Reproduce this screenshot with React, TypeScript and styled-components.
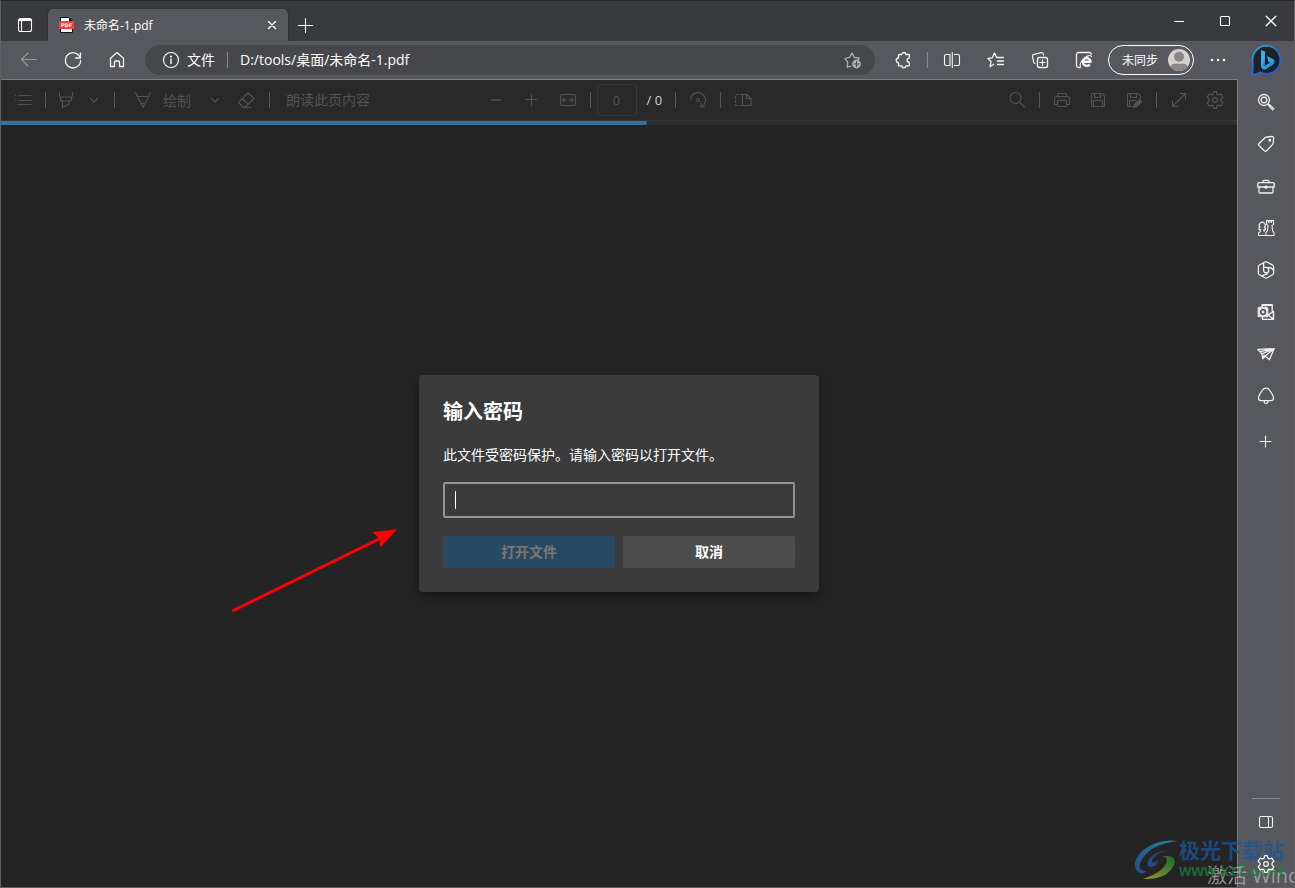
import React from "react";
import styled, { createGlobalStyle } from "styled-components";

const GlobalStyle = createGlobalStyle`
  *, *::before, *::after { box-sizing: border-box; }
  body {
    margin: 0;
    background: #242424;
    font-family: "Open Sans", "Noto Sans CJK SC", sans-serif;
    font-size: 14px;
    color: #fff;
  }
  button, input { font: inherit; color: inherit; }
`;

const Browser = styled.div`
  position: relative;
  display: flex;
  flex-direction: column;
  min-height: 100vh;
  overflow: hidden;
  border: 1px solid #5f5f61;
  border-top-color: #2b2b2f;
  background: #57585d;
`;

const Glyph = styled.svg<{ $size?: number }>`
  display: block;
  flex: none;
  width: ${(p) => p.$size ?? 20}px;
  height: ${(p) => p.$size ?? 20}px;
  fill: none;
  stroke: currentColor;
  stroke-width: 1.1;
  stroke-linecap: round;
  stroke-linejoin: round;
`;

type IconProps = { children: React.ReactNode; size?: number };
const Icon = ({ children, size }: IconProps) => (
  <Glyph viewBox="0 0 20 20" $size={size} aria-hidden="true">
    {children}
  </Glyph>
);

/* ---------- title bar ---------- */

const TitleBar = styled.header`
  display: flex;
  align-items: flex-end;
  height: 40px;
  background: #393a3d;
`;

const TitleButton = styled.button<{ $width: number }>`
  display: flex;
  align-items: center;
  justify-content: center;
  width: ${(p) => p.$width}px;
  height: 32px;
  padding: 0;
  border: 0;
  background: none;
`;

const Tab = styled.div`
  display: flex;
  align-items: center;
  gap: 8px;
  width: 240px;
  height: 32px;
  padding: 0 6px 0 10px;
  border-radius: 5px 5px 0 0;
  background: #57585d;
  box-shadow: 0 0 2px #222327;
  font-size: 12px;
`;

const TabTitle = styled.span`
  flex: 1;
  white-space: nowrap;
`;

const TabClose = styled.button`
  display: flex;
  padding: 0;
  border: 0;
  background: none;
`;

const WindowControls = styled.div`
  display: flex;
  align-self: flex-start;
  height: 40px;
  margin-left: auto;
  align-items: center;
`;

/* ---------- navigation bar ---------- */

const NavBar = styled.nav`
  position: relative;
  display: flex;
  align-items: center;
  height: 38px;
  padding: 0 2px 0 6px;
  background: #57585d;
`;

const NavButton = styled.button<{ $dim?: boolean }>`
  display: flex;
  align-items: center;
  justify-content: center;
  flex: none;
  width: 44px;
  height: 32px;
  padding: 0;
  border: 0;
  background: none;
  color: ${(p) => (p.$dim ? "#9a9a9d" : "#f4f4f4")};
`;

const Address = styled.div`
  display: flex;
  align-items: center;
  flex: 1;
  min-width: 0;
  height: 30px;
  margin: 0 6px;
  padding: 0 12px 0 16px;
  border-radius: 15px;
  background: #46474b;
`;

const SiteInfo = styled.button`
  display: flex;
  align-items: center;
  gap: 6px;
  padding: 0;
  border: 0;
  background: none;
  line-height: 18px;
  white-space: nowrap;
`;

const NavDivider = styled.span<{ $gap: number }>`
  width: 1px;
  height: 16px;
  margin: 0 ${(p) => p.$gap}px;
  background: #88898c;
`;

const AddressInput = styled.input`
  flex: 1;
  min-width: 0;
  padding: 0 0 2px;
  border: 0;
  outline: 0;
  background: none;
`;

const StarButton = styled(TabClose)`
  color: #b0b0b2;
`;

const Profile = styled.button`
  display: flex;
  align-items: center;
  justify-content: space-between;
  flex: none;
  width: 86px;
  height: 30px;
  margin: 0 2px;
  padding: 0 2px 0 13px;
  border: 1px solid #fff;
  border-radius: 15px;
  background: none;
  font-size: 12px;
`;

const BingButton = styled(NavButton)`
  width: 52px;
`;

/* ---------- content ---------- */

const Content = styled.div`
  display: flex;
  flex: 1;
`;

const Viewer = styled.main`
  position: relative;
  display: flex;
  flex-direction: column;
  flex: 1;
  min-width: 0;
  border-top: 1px solid #7d7e82;
  border-right: 1px solid #7d7e82;
  background: #242424;
`;

const PdfBar = styled.div`
  display: grid;
  grid-template-columns: 1fr auto 1fr;
  height: 41px;
  border-bottom: 1px solid #373737;
  background: #292929;
  color: #535353;
`;

const ToolGroup = styled.div<{ $end?: boolean }>`
  display: flex;
  align-items: center;
  justify-content: ${(p) => (p.$end ? "flex-end" : "flex-start")};
  padding: 0 4px;
`;

const Tool = styled.button<{ $width?: number }>`
  display: flex;
  align-items: center;
  justify-content: center;
  gap: 10px;
  width: ${(p) => p.$width ?? 36}px;
  height: 32px;
  padding: 0;
  border: 0;
  background: none;
  white-space: nowrap;
`;

const TextTool = styled(Tool)`
  width: auto;
  padding: 0 12px 0 10px;
`;

const ReadTool = styled(TextTool)`
  padding: 0 12px 2px;
`;

const ToolDivider = styled.span<{ $gap?: number }>`
  width: 1px;
  height: 16px;
  margin: 0 ${(p) => p.$gap ?? 4}px;
  background: #565656;
`;

const PageInput = styled.input`
  width: 40px;
  height: 32px;
  margin: 0 0 0 2px;
  padding: 0;
  border: 1px solid #363636;
  border-radius: 2px;
  background: none;
  text-align: center;
  font-size: 13px;
`;

const PageTotal = styled.span`
  width: 34px;
  padding-left: 10px;
  color: #d0d0d0;
  font-size: 13px;
  white-space: nowrap;
`;

const Track = styled.div`
  height: 4px;
  background: #2e2e2e;
`;

const Progress = styled.div`
  width: 646px;
  max-width: 100%;
  height: 4px;
  border-radius: 0 2px 2px 0;
  background: #35709f;
`;

/* ---------- dialog ---------- */

const Overlay = styled.div`
  position: absolute;
  inset: 0;
  display: flex;
  align-items: center;
  justify-content: center;
`;

const Dialog = styled.form`
  position: relative;
  width: 400px;
  padding: 24px;
  border-radius: 4px;
  background: #3b3b3b;
  box-shadow: 0 4px 12px rgba(0, 0, 0, 0.45);
`;

const DialogTitle = styled.h1`
  margin: 0 0 20px;
  font-size: 20px;
  line-height: 26px;
  font-weight: 700;
`;

const DialogLabel = styled.label`
  display: block;
  margin-bottom: 17px;
  line-height: 20px;
`;

const PasswordField = styled.div`
  position: relative;
  margin-bottom: 18px;

  &::after {
    content: "";
    position: absolute;
    top: 9px;
    left: 12px;
    width: 1px;
    height: 18px;
    background: #fff;
  }
`;

const PasswordInput = styled.input`
  display: block;
  width: 100%;
  height: 36px;
  padding: 0 10px;
  border: 2px solid #949494;
  border-radius: 2px;
  outline: 0;
  background: transparent;
  caret-color: transparent;
`;

const Actions = styled.div`
  display: flex;
  gap: 8px;
`;

const ActionButton = styled.button<{ $primary?: boolean }>`
  flex: 1;
  height: 32px;
  padding: 0 0 2px;
  border: 0;
  border-radius: 2px;
  background: ${(p) => (p.$primary ? "#294a63" : "#4d4d4d")};
  color: ${(p) => (p.$primary ? "#7b7773" : "#fff")};
  font-weight: 700;
`;

const Arrow = styled.svg`
  position: absolute;
  top: 150px;
  right: calc(100% + 19px);
  width: 170px;
  height: 90px;
`;

/* ---------- sidebar ---------- */

const Sidebar = styled.aside`
  position: relative;
  z-index: 1;
  display: flex;
  flex-direction: column;
  align-items: center;
  flex: none;
  width: 56px;
  padding: 2px 0;
`;

const SideButton = styled.button`
  display: flex;
  align-items: center;
  justify-content: center;
  width: 42px;
  height: 42px;
  padding: 0;
  border: 0;
  background: none;
  color: #f0f0f0;
`;

const AddButton = styled(SideButton)`
  margin-top: 4px;
`;

const SideRule = styled.hr`
  width: 28px;
  height: 1px;
  margin: auto 0 2px;
  border: 0;
  background: #88898c;
`;

/* ---------- watermark ---------- */

const Watermark = styled.div`
  position: absolute;
  right: 10px;
  bottom: 5px;
  display: flex;
  align-items: center;
  pointer-events: none;
  opacity: 0.75;
`;

const WatermarkText = styled.div`
  display: flex;
  flex-direction: column;
  white-space: nowrap;
  font-weight: 700;
`;

const SiteName = styled.span`
  color: #1c5597;
  font-size: 21px;
  line-height: 22px;
`;

const SiteUrl = styled.span`
  color: #14803a;
  font-size: 16px;
  line-height: 20px;
  font-family: "Liberation Sans", sans-serif;
`;

const Activation = styled.div`
  position: absolute;
  left: calc(100% - 87px);
  bottom: -3px;
  color: rgba(185, 185, 185, 0.72);
  font-size: 20px;
  line-height: 28px;
  white-space: nowrap;
  pointer-events: none;
`;

const gear =
  "M8.1 4.1 L8.7 1.6 H11.3 L11.9 4.1 L13.3 4.9 L15.8 4.2 L17.8 7.2 L16 9.1 V10.9 L17.8 12.8 L15.8 15.8 L13.3 15.1 L11.9 15.9 L11.3 18.4 H8.7 L8.1 15.9 L6.7 15.1 L4.2 15.8 L2.2 12.8 L4 10.9 V9.1 L2.2 7.2 L4.2 4.2 L6.7 4.9 Z";

const GearIcon = () => (
  <Icon>
    <path d={gear} strokeWidth="1.3" />
    <circle cx="10" cy="10" r="2.3" strokeWidth="1.3" />
  </Icon>
);

const ChevronIcon = () => (
  <Icon>
    <path d="M6.5 8.5 L10 12 L13.5 8.5" />
  </Icon>
);

const BingIcon = () => (
  <svg width="32" height="32" viewBox="0 0 32 32" aria-hidden="true">
    <defs>
      <linearGradient id="ring" x1="0" y1="0" x2="0.6" y2="1">
        <stop offset="0" stopColor="#2cc3dc" />
        <stop offset="0.5" stopColor="#1b78dc" />
        <stop offset="1" stopColor="#2158e8" />
      </linearGradient>
      <linearGradient id="bee" x1="0" y1="0" x2="0.7" y2="1">
        <stop offset="0" stopColor="#3a9cff" />
        <stop offset="0.5" stopColor="#36b6f6" />
        <stop offset="1" stopColor="#2a7bea" />
      </linearGradient>
      <linearGradient id="bowl" x1="0" y1="0" x2="1" y2="1">
        <stop offset="0" stopColor="#30d8e8" />
        <stop offset="1" stopColor="#1f77d8" />
      </linearGradient>
    </defs>
    <path
      d="M16.5 1.8 A14 14 0 1 1 10 28.3 Q6 30.6 2.2 30.2 Q3.3 26 2.6 17 A14 14 0 0 1 16.5 1.8 Z"
      fill="#202125"
      stroke="url(#ring)"
      strokeWidth="1.6"
    />
    <path d="M11 6 L15 7.4 V21 L12.6 24 L11 22.6 Z" fill="url(#bee)" />
    <path
      d="M17 12 L24 15.6 Q25.6 19 22.6 21 L15.4 25.4 Q12.4 26.4 11.2 22.8 L14.6 22 L20 18.7 L18.4 17.8 Z"
      fill="url(#bowl)"
    />
  </svg>
);

const PdfFileIcon = () => (
  <svg width="18" height="18" viewBox="0 0 18 18" aria-hidden="true">
    <path d="M2.5 1.5 H11 L14.5 5 V16.5 H2.5 Z" fill="#fff" stroke="#111" strokeWidth="1" />
    <path d="M11 1.5 V5 H14.5 Z" fill="#111" />
    <rect x="1" y="5" width="15" height="8" rx="1" fill="#f73b3b" />
    <text
      x="8.5"
      y="11"
      textAnchor="middle"
      fontSize="5"
      fontWeight="700"
      fontFamily="DejaVu Sans, sans-serif"
      fill="#fff"
    >
      PDF
    </text>
  </svg>
);

const Avatar = () => (
  <svg width="24" height="24" viewBox="0 0 24 24" aria-hidden="true">
    <defs>
      <clipPath id="face">
        <circle cx="12" cy="12" r="11" />
      </clipPath>
    </defs>
    <circle cx="12" cy="12" r="11" fill="#d3d1ce" />
    <g clipPath="url(#face)" fill="#8a8785">
      <circle cx="12" cy="8.8" r="5" />
      <path d="M3.5 24 V20 Q3.5 15.8 8 15.8 H16 Q20.5 15.8 20.5 20 V24 Z" />
    </g>
  </svg>
);

export default function App() {
  return (
    <Browser>
      <GlobalStyle />
      <TitleBar>
        <TitleButton $width={47} aria-label="标签页操作">
          <Icon>
            <rect x="3.5" y="3.5" width="13" height="13" rx="2" />
            <path d="M4 4.5 H16 M4 5.5 H16 M6.5 6 V16" />
          </Icon>
        </TitleButton>
        <Tab>
          <PdfFileIcon />
          <TabTitle>未命名-1.pdf</TabTitle>
          <TabClose aria-label="关闭标签页">
            <Icon>
              <path d="M6.5 6.5 L13.5 13.5 M13.5 6.5 L6.5 13.5" strokeWidth="1.4" />
            </Icon>
          </TabClose>
        </Tab>
        <TitleButton $width={34} aria-label="新建标签页">
          <Icon>
            <path d="M10.5 3.5 V17.5 M3.5 10.5 H17.5" />
          </Icon>
        </TitleButton>
        <WindowControls>
          <TitleButton $width={46} aria-label="最小化">
            <Icon>
              <path d="M5.5 10.5 H14.5" />
            </Icon>
          </TitleButton>
          <TitleButton $width={46} aria-label="最大化">
            <Icon>
              <rect x="5.5" y="5.5" width="9" height="9" rx="1" />
            </Icon>
          </TitleButton>
          <TitleButton $width={46} aria-label="关闭">
            <Icon>
              <path d="M5.2 5.2 L14.8 14.8 M14.8 5.2 L5.2 14.8" strokeWidth="1.3" />
            </Icon>
          </TitleButton>
        </WindowControls>
      </TitleBar>

      <NavBar>
        <NavButton $dim aria-label="后退">
          <Icon>
            <path d="M17.5 9.5 H2.5 M9 3 L2.5 9.5 L9 16" />
          </Icon>
        </NavButton>
        <NavButton aria-label="刷新">
          <Icon>
            <path d="M17.3 8.2 A7.6 7.6 0 1 0 17.6 10.5 M17.4 3 V8 H12.4" strokeWidth="1.3" />
          </Icon>
        </NavButton>
        <NavButton aria-label="主页">
          <Icon>
            <path
              d="M3.5 8.2 L10 2.6 L16.5 8.2 V16.5 H12.5 V12 A1 1 0 0 0 11.5 11 H8.5 A1 1 0 0 0 7.5 12 V16.5 H3.5 Z"
              strokeWidth="1.3"
            />
          </Icon>
        </NavButton>
        <Address>
          <SiteInfo>
            <Icon>
              <circle cx="10" cy="10" r="7.5" />
              <path d="M10 9 V13.5" strokeWidth="1.4" />
              <circle cx="10" cy="6.6" r="0.5" fill="currentColor" />
            </Icon>
            文件
          </SiteInfo>
          <NavDivider $gap={12} />
          <AddressInput aria-label="地址" defaultValue="D:/tools/桌面/未命名-1.pdf" />
          <StarButton aria-label="添加到收藏夹">
            <Icon>
              <path
                d="M8 16.2 L4.2 17.2 L4.7 12 L1.8 8.5 L6.6 7.4 L9 3 L11.4 7.4 L16.3 8.2 L15 9.8"
                strokeWidth="1.2"
              />
              <circle cx="13.5" cy="14" r="4.4" fill="currentColor" stroke="none" />
              <path d="M13.5 11.6 V16.4 M11.1 14 H15.9" stroke="#46474b" />
            </Icon>
          </StarButton>
        </Address>
        <NavButton aria-label="扩展">
          <Icon>
            <path
              d="M6.2 4.5 H8.8 A2 2 0 0 1 12.8 4.5 H16.3 V7.5 A0.8 0.8 0 0 1 15.5 8.3 A1.9 1.9 0 0 0 15.5 12 A0.8 0.8 0 0 1 16.3 12.8 V15.8 H12.8 A2 2 0 0 1 8.8 15.8 H5.5 V12.6 A2.3 2.3 0 0 1 5.5 8 V5.2 Z"
              strokeWidth="1.3"
            />
          </Icon>
        </NavButton>
        <NavDivider $gap={2} />
        <NavButton aria-label="拆分屏幕">
          <Icon>
            <path
              d="M8 4.5 H4 A1.5 1.5 0 0 0 2.5 6 V14 A1.5 1.5 0 0 0 4 15.5 H8 Z M12.5 4.5 H16 A1.5 1.5 0 0 1 17.5 6 V14 A1.5 1.5 0 0 1 16 15.5 H12.5"
            />
            <path d="M10.3 2.5 V17.5" />
          </Icon>
        </NavButton>
        <NavButton aria-label="收藏夹">
          <Icon>
            <path
              d="M7.7 14.2 L4 16.6 L5 11.8 L2 8.5 L6.2 7.8 L8.5 3 L10.6 7.5 H17.5 M11.5 11 H17.5 M11.5 14.5 H17.5"
              strokeWidth="1.3"
            />
          </Icon>
        </NavButton>
        <NavButton aria-label="集锦">
          <Icon>
            <rect x="7.5" y="7.5" width="10" height="10" rx="2" strokeWidth="1.3" />
            <path
              d="M12.5 9.8 V15.2 M9.8 12.5 H15.2 M5 13.5 A1.8 1.8 0 0 1 3.6 12 L2.5 6.4 A1.8 1.8 0 0 1 4 4.4 L11 2.6 A1.8 1.8 0 0 1 13.2 4 L13.5 5.2"
              strokeWidth="1.2"
            />
          </Icon>
        </NavButton>
        <NavButton aria-label="Internet Explorer 模式">
          <Icon>
            <path d="M6 17.5 H4.5 A2 2 0 0 1 2.5 15.5 V4.5 A2 2 0 0 1 4.5 2.5 H15.5 A2 2 0 0 1 17.3 4" strokeWidth="1.3" />
            <path d="M8.4 11.7 H16.6 A3.9 3.9 0 1 0 15.8 14.4" strokeWidth="2.4" strokeLinecap="butt" />
            <path d="M6.5 17 Q4.8 13.4 10.5 7.8 Q16 4 17.6 6.6" />
          </Icon>
        </NavButton>
        <Profile>
          未同步
          <Avatar />
        </Profile>
        <NavButton aria-label="设置及其他">
          <Icon>
            <g fill="currentColor" stroke="none">
              <circle cx="4" cy="10" r="1.3" />
              <circle cx="10" cy="10" r="1.3" />
              <circle cx="16" cy="10" r="1.3" />
            </g>
          </Icon>
        </NavButton>
        <BingButton aria-label="发现">
          <BingIcon />
        </BingButton>
      </NavBar>

      <Content>
        <Viewer>
          <PdfBar role="toolbar">
            <ToolGroup>
              <Tool aria-label="目录">
                <Icon>
                  <path
                    d="M6 5.5 H18 M6 10.5 H18 M6 14.5 H18 M2.5 5.5 H3 M2.5 9.5 H3 M4.5 14.5 H5"
                    strokeWidth="1.2"
                  />
                </Icon>
              </Tool>
              <ToolDivider />
              <Tool $width={32} aria-label="突出显示">
                <Icon>
                  <path d="M3.5 2.5 V5.5 A1.5 1.5 0 0 0 5 7 H15 A1.5 1.5 0 0 0 16.5 5.5 V2.5 M4.5 7 V9 A2 2 0 0 0 6.5 11 H13.5 A2 2 0 0 0 15.5 9 V7 M6.5 11 V17.5 L13 14 V11" />
                </Icon>
              </Tool>
              <Tool $width={24} aria-label="突出显示选项">
                <ChevronIcon />
              </Tool>
              <ToolDivider $gap={8} />
              <TextTool>
                <Icon>
                  <path d="M2.5 2.5 L10 17.5 L17.5 2.5 M4.2 6.5 H15.8 M8 13.5 L10 17.5 L12 13.5 Z" />
                </Icon>
                绘制
              </TextTool>
              <Tool $width={24} aria-label="绘制选项">
                <ChevronIcon />
              </Tool>
              <Tool $width={38} aria-label="擦除">
                <Icon>
                  <path d="M3 12 L12 3 L18 8.5 L9.5 17 H7 L3 13 Z M6 9 L12.5 14 M7 17.5 H15" />
                </Icon>
              </Tool>
              <ToolDivider />
              <ReadTool>朗读此页内容</ReadTool>
            </ToolGroup>
            <ToolGroup>
              <Tool aria-label="缩小">
                <Icon>
                  <path d="M5 10 H15" strokeWidth="1.5" />
                </Icon>
              </Tool>
              <Tool aria-label="放大">
                <Icon>
                  <path d="M9.5 4.5 V15.5 M4 9.5 H15" />
                </Icon>
              </Tool>
              <Tool aria-label="适应宽度">
                <Icon>
                  <rect x="2.5" y="4.5" width="15" height="11" rx="1.5" />
                  <path d="M5 10 H8.5 M11.5 10 H15 M6.5 8.2 L4.8 10 L6.5 11.8 M13.5 8.2 L15.2 10 L13.5 11.8" />
                </Icon>
              </Tool>
              <ToolDivider />
              <PageInput aria-label="页码" defaultValue="0" />
              <PageTotal>/ 0</PageTotal>
              <ToolDivider />
              <Tool aria-label="旋转">
                <Icon>
                  <path d="M2.5 10 A7.5 7.5 0 1 1 13.5 16.7 M12.8 13.2 V17 H16.5" />
                  <circle cx="10" cy="10" r="1.5" />
                </Icon>
              </Tool>
              <ToolDivider />
              <Tool aria-label="页面视图">
                <Icon>
                  <path d="M9.5 4.5 H14 L18 8.5 V15.5 H9.5 Z M13.5 4.5 V8.5 H18" />
                  <path d="M9.5 4.5 H4 A1.5 1.5 0 0 0 2.5 6 V14 A1.5 1.5 0 0 0 4 15.5 H9.5" strokeDasharray="2 2" />
                </Icon>
              </Tool>
            </ToolGroup>
            <ToolGroup $end>
              <Tool aria-label="查找">
                <Icon>
                  <circle cx="8.5" cy="8" r="5.5" />
                  <path d="M12.5 12 L17.5 17" />
                </Icon>
              </Tool>
              <ToolDivider />
              <Tool aria-label="打印">
                <Icon>
                  <path d="M5.5 6 V4.5 A1.5 1.5 0 0 1 7 3.5 H13 A1.5 1.5 0 0 1 14.5 4.5 V6 M5 14.5 H2.5 V8 A2 2 0 0 1 4.5 6.5 H15.5 A2 2 0 0 1 17.5 8 V14.5 H15" />
                  <rect x="5.5" y="10.5" width="9" height="6" rx="1" />
                </Icon>
              </Tool>
              <Tool aria-label="保存">
                <Icon>
                  <path d="M3.5 4.5 A1 1 0 0 1 4.5 3.5 H14 L16.5 6 V15.5 A1 1 0 0 1 15.5 16.5 H4.5 A1 1 0 0 1 3.5 15.5 Z M6.5 3.5 V7.5 H12.5 V3.5 M5.5 16.5 V10.5 H14.5 V16.5" />
                </Icon>
              </Tool>
              <Tool aria-label="另存为">
                <Icon>
                  <path d="M8 16.5 H4.5 A1 1 0 0 1 3.5 15.5 V4.5 A1 1 0 0 1 4.5 3.5 H14 L16.5 6 V8.5 M6.5 3.5 V7.5 H12.5 V3.5 M5.5 16.5 V10.5 H12" />
                  <path d="M9.5 17.5 L10.3 14.5 L15.5 9.5 L17.8 11.7 L12.6 16.8 Z" fill="currentColor" />
                </Icon>
              </Tool>
              <ToolDivider />
              <Tool aria-label="全屏">
                <Icon>
                  <path d="M3.5 16.5 L16.5 3.5 M11 3.5 H16.5 V9 M3.5 11 V16.5 H9" />
                </Icon>
              </Tool>
              <Tool aria-label="设置">
                <GearIcon />
              </Tool>
            </ToolGroup>
          </PdfBar>
          <Track>
            <Progress />
          </Track>
          <Overlay>
            <Dialog role="dialog" aria-labelledby="dialog-title" onSubmit={(e) => e.preventDefault()}>
              <DialogTitle id="dialog-title">输入密码</DialogTitle>
              <DialogLabel htmlFor="password">此文件受密码保护。请输入密码以打开文件。</DialogLabel>
              <PasswordField>
                <PasswordInput id="password" type="password" />
              </PasswordField>
              <Actions>
                <ActionButton $primary disabled>
                  打开文件
                </ActionButton>
                <ActionButton type="button">取消</ActionButton>
              </Actions>
              <Arrow viewBox="0 0 170 90" aria-hidden="true">
                <path d="M3.5 85.5 L152 12.5" stroke="#f00" strokeWidth="3" strokeLinecap="round" />
                <path d="M167 4.5 L142.5 7 L149.5 13.5 L150 22.5 Z" fill="#f00" />
              </Arrow>
            </Dialog>
          </Overlay>
        </Viewer>

        <Sidebar>
          <SideButton aria-label="搜索">
            <Icon>
              <circle cx="8" cy="8" r="5.5" strokeWidth="1.3" />
              <circle cx="8" cy="8" r="2.8" strokeWidth="1.2" />
              <path d="M12 12 L13.3 13.3" strokeWidth="1.6" />
              <path d="M13.6 12.8 L17.8 16.6 L16.6 17.8 L12.8 13.8 Z" strokeWidth="1.2" />
            </Icon>
          </SideButton>
          <SideButton aria-label="购物">
            <Icon>
              <path
                d="M10.7 3 L15.8 2.5 Q17.6 2.4 17.6 4.2 L17.2 9 Q17.1 9.8 16.6 10.4 L10.6 16.9 Q9.6 18 8.5 16.9 L3 11.5 Q2 10.4 3 9.4 L9.3 3.6 Q9.9 3 10.7 3 Z"
                strokeWidth="1.3"
              />
              <circle cx="13.8" cy="6.3" r="0.9" fill="currentColor" />
            </Icon>
          </SideButton>
          <SideButton aria-label="工具">
            <Icon>
              <path
                d="M7 6.5 V5.3 A1 1 0 0 1 8 4.3 H12 A1 1 0 0 1 13 5.3 V6.5 M3 6.7 H17 A1.2 1.2 0 0 1 18.2 7.9 V11 H1.8 V7.9 A1.2 1.2 0 0 1 3 6.7 Z M3 11 V16 A1 1 0 0 0 4 17 H16 A1 1 0 0 0 17 16 V11"
                strokeWidth="1.3"
              />
              <circle cx="10" cy="11.2" r="1.6" fill="currentColor" stroke="none" />
            </Icon>
          </SideButton>
          <SideButton aria-label="游戏">
            <Icon>
              <path d="M9 17.5 H2.5 V15.2 L4.2 13.6 L4.6 11.6 H3 V10 L4 9.4 A3 3 0 1 1 8.4 9.4 L9.5 10 V11.6 H7.8 L8.2 13.4" />
              <path d="M10.6 2.5 V6.4 L12 7.6 L11.4 12.8 L9.8 15 V17.5 H18 V15 L16.6 12.8 L16 7.6 L17.5 6.4 V2.5 H15.6 V4.3 H15 V2.5 H13.2 V4.3 H12.4 V2.5 Z" />
            </Icon>
          </SideButton>
          <SideButton aria-label="Microsoft 365">
            <Icon>
              <path
                d="M9 2 Q10 1.5 11 2 L16.6 5 Q17.6 5.6 17.6 6.7 V13 Q17.6 14.2 16.6 14.8 L11 17.8 Q10 18.4 9 17.8 L3.4 14.8 Q2.4 14.2 2.4 13 V6.7 Q2.4 5.6 3.4 5 Z"
                strokeWidth="1.3"
              />
              <path
                d="M7.6 2.8 V10.2 Q7.8 12.6 10 12.9 Q12.4 12.8 12.8 10.4 Q12.7 8 10.6 7.4 L7.8 7.2 M10.6 7.3 L15.4 8 L17.5 10.2 M12.6 11.4 L10.8 14.2 L5.6 15.8"
                strokeWidth="1.3"
              />
            </Icon>
          </SideButton>
          <SideButton aria-label="Outlook">
            <Icon>
              <path d="M6 5 V2.8 H16.2 V9 M6.5 15 V17.4 H17.5 V9.5 L12 13 L17 16.8 M7 3.4 H16" strokeWidth="1.4" />
              <rect x="2.2" y="5.2" width="9.6" height="9.6" rx="1" fill="#e8e8e8" stroke="#e8e8e8" />
              <circle cx="7" cy="10" r="2.3" stroke="#57585d" strokeWidth="1.7" />
            </Icon>
          </SideButton>
          <SideButton aria-label="Drop">
            <Icon>
              <path
                d="M1.8 5.4 L18.2 4.6 L13.4 15.8 L9.3 12 L6.8 14.8 L5.8 9.8 Z M5.8 9.8 L18.2 4.6 L9.3 12 M4 7.6 L17 4.8 M6.8 14.8 L8 11"
                strokeWidth="1.3"
              />
            </Icon>
          </SideButton>
          <SideButton aria-label="通知">
            <Icon>
              <path
                d="M10 2.2 Q7.5 2.2 6.3 4.3 Q2.5 9.6 2.5 12 Q2.5 14.6 5 14.6 H15 Q17.5 14.6 17.5 12 Q17.5 9.6 13.7 4.3 Q12.5 2.2 10 2.2 Z M8.2 15 V16.2 Q8.2 17.4 10 17.4 Q11.8 17.4 11.8 16.2 V15"
                strokeWidth="1.2"
              />
            </Icon>
          </SideButton>
          <AddButton aria-label="自定义">
            <Icon>
              <path d="M9.5 4 V15 M4 9.5 H15" />
            </Icon>
          </AddButton>
          <SideRule />
          <SideButton aria-label="侧边栏">
            <Icon>
              <rect x="3.5" y="4.5" width="13" height="11" rx="1.5" />
              <path d="M12.5 4.5 V15.5" />
            </Icon>
          </SideButton>
          <SideButton aria-label="侧边栏设置">
            <GearIcon />
          </SideButton>
        </Sidebar>
      </Content>

      <Activation>激活 Windows</Activation>
      <Watermark>
        <svg width="46" height="44" viewBox="0 0 46 44" aria-hidden="true">
          <defs>
            <linearGradient id="swooshTop" x1="1" y1="0" x2="0" y2="1">
              <stop offset="0" stopColor="#26a3b5" />
              <stop offset="1" stopColor="#2458ad" />
            </linearGradient>
            <linearGradient id="swooshEnd" x1="1" y1="0" x2="0" y2="1">
              <stop offset="0" stopColor="#12803a" />
              <stop offset="1" stopColor="#c5bd2a" />
            </linearGradient>
          </defs>
          <path
            d="M45 3 Q24 0 9 13 Q-3 26 5 34 Q9 37 14 33 Q3 33 8 23 Q17 6 45 3 Z"
            fill="url(#swooshTop)"
          />
          <path
            d="M36 12 Q23 13 17 20 Q11 29 19 29 Q24 28 25 22 Q18 27 19 22 Q24 14 36 12 Z"
            fill="#2458ad"
          />
          <path d="M26 19 Q33 17 34 22 Q33 33 10 41 Q34 42 41 27 Q45 15 26 19 Z" fill="url(#swooshEnd)" />
        </svg>
        <WatermarkText>
          <SiteName>极光下载站</SiteName>
          <SiteUrl>www.xz7.com</SiteUrl>
        </WatermarkText>
      </Watermark>
    </Browser>
  );
}
